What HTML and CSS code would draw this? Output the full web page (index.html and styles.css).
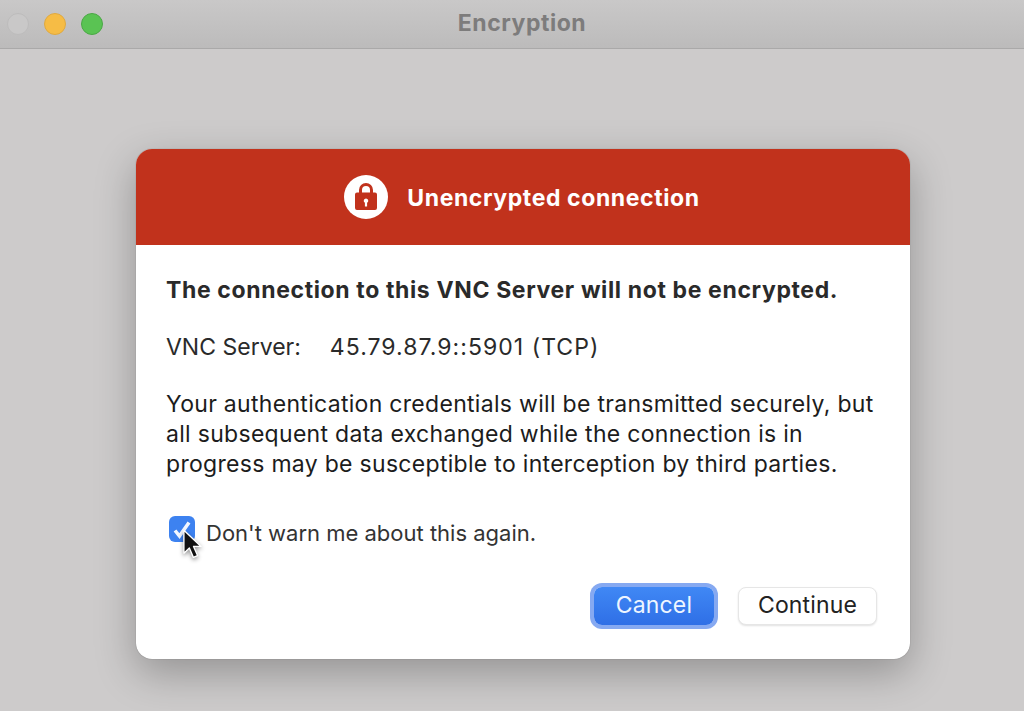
FILE: index.html
```html
<!DOCTYPE html>
<html lang="en">
<head>
<meta charset="utf-8">
<title>Encryption</title>
<link rel="stylesheet" href="styles.css">
</head>
<body>
<div class="window">
  <header class="titlebar">
    <div class="lights">
      <span class="light light-off"></span>
      <span class="light light-min"></span>
      <span class="light light-max"></span>
    </div>
    <h1 class="window-title">Encryption</h1>
  </header>
  <main class="stage">
    <section class="dialog">
      <div class="banner">
        <span class="lock-badge">
          <svg class="lock" viewBox="0 0 44 44" aria-hidden="true">
            <path d="M16.5 18.5V15a5.5 5.5 0 0 1 11 0v3.5" fill="none" stroke="#c1321c" stroke-width="3"/>
            <path fill="#c1321c" fill-rule="evenodd" d="M13 17.5h18a2 2 0 0 1 2 2V33a2 2 0 0 1-2 2H13a2 2 0 0 1-2-2V19.500a2 2 0 0 1 2-2zM22 23.500a2.300 2.300 0 0 0-1.100 4.300V31.500h2.200v-3.700A2.300 2.300 0 0 0 22 23.500z"/>
          </svg>
        </span>
        <h2 class="banner-title">Unencrypted connection</h2>
      </div>
      <div class="content">
        <p class="headline">The connection to this VNC Server will not be encrypted.</p>
        <p class="server"><span class="server-label">VNC Server:</span><span class="server-addr">45.79.87.9::5901 (TCP)</span></p>
        <p class="message">Your authentication credentials will be transmitted securely, but<br>all subsequent data exchanged while the connection is in<br>progress may be susceptible to interception by third parties.</p>
        <div class="check-row">
          <span class="checkbox">
            <svg class="tick" viewBox="0 0 26 26" aria-hidden="true"><path d="M6 14.500l4.500 5.500L20 6.500" fill="none" stroke="#f2f7ff" stroke-width="3.500"/></svg>
            <svg class="cursor" viewBox="0 0 24 34" aria-hidden="true"><path d="M2 1.500v25l6-5.600 4.400 10.200 4.600-2-4.400-10h8.200z" fill="#111" stroke="#fff" stroke-width="1.500" stroke-linejoin="round"/></svg>
          </span>
          <span class="check-label">Don't warn me about this again.</span>
        </div>
        <div class="actions">
          <button class="btn btn-primary" type="button">Cancel</button>
          <button class="btn btn-plain" type="button">Continue</button>
        </div>
      </div>
    </section>
  </main>
</div>
</body>
</html>
```
FILE: styles.css
```css
* { box-sizing: border-box; }
html, body { margin: 0; height: 100%; }
body { font-family: Inter, "Liberation Sans", sans-serif; background: #cdcbcb; overflow: hidden; }
.window { width: 1024px; height: 711px; display: flex; flex-direction: column; background: #cdcbcb; }
.titlebar { position: relative; height: 49px; flex: none; display: flex; align-items: center; justify-content: center;
  padding: 0 0 3px 20px; background: linear-gradient(#c9c8c8, #bcbbbb); border-bottom: 1px solid #aaa9a9; }
.lights { position: absolute; left: 7px; top: 13px; display: flex; gap: 15px; }
.light { width: 22px; height: 22px; border-radius: 50%; }
.light-off { background: #c9c8c8; border: 1px solid #bdbcbc; }
.light-min { background: #f6bc45; border: 1px solid #e0a93f; }
.light-max { background: #5ac353; border: 1px solid #4aa845; }
.window-title { margin: 0; font-size: 23px; font-weight: 700; letter-spacing: .55px; color: #7d7c7c; }
.stage { flex: 1; padding: 100px 0 0 136px; }
.dialog { width: 774px; height: 510px; border-radius: 16px; overflow: hidden; background: #fff;
  box-shadow: 0 0 1px rgba(0,0,0,.45), 0 14px 40px rgba(0,0,0,.28); }
.banner { height: 96px; padding-right: 2px; background: #c1321c; display: flex; align-items: center; justify-content: center; gap: 19px; color: #fff; }
.lock-badge { width: 44px; height: 44px; border-radius: 50%; background: #fff; display: block; }
.lock { display: block; width: 44px; height: 44px; }
.banner-title { margin: 0; padding-top: 2px; font-size: 23px; font-weight: 700; letter-spacing: .6px; }
.content { padding: 30px 33px 0 30px; color: #2a2a2a; font-size: 23px; line-height: 30px; }
.content p { margin: 0; }
.headline { font-weight: 700; letter-spacing: .63px; margin-bottom: 27px !important; }
.server { display: flex; gap: 29px; margin-bottom: 27px !important; }
.server-addr { letter-spacing: 1.05px; }
.message { color: #1c1c1c; letter-spacing: .3px; white-space: nowrap; }
.check-row { display: flex; align-items: flex-start; margin-top: 39px; padding-left: 3px; gap: 11px; }
.checkbox { position: relative; width: 26px; height: 26px; margin-top: -2px; border-radius: 6px; background: #3d82f0; flex: none; }
.tick { display: block; width: 26px; height: 26px; }
.cursor { position: absolute; left: 13px; top: 13px; width: 22px; height: 31px; filter: drop-shadow(0 2px 2px rgba(0,0,0,.4)); }
.check-label { color: #333; font-size: 22px; }
.actions { display: flex; justify-content: flex-end; align-items: center; gap: 24px; margin-top: 39px; }
.btn { font: 400 23px/1 Inter, "Liberation Sans", sans-serif; letter-spacing: .15px; height: 38px; border-radius: 8px; padding: 0 0 2px; }
.btn-primary { width: 120px; color: #eef5ff; border: 0; background: linear-gradient(#4088f5, #2f6fe6); box-shadow: 0 0 0 4px #86a9f1; }
.btn-plain { width: 139px; color: #222; background: #fff; border: 1px solid #e6e6e6; box-shadow: 0 1px 2px rgba(0,0,0,.12); }
```
